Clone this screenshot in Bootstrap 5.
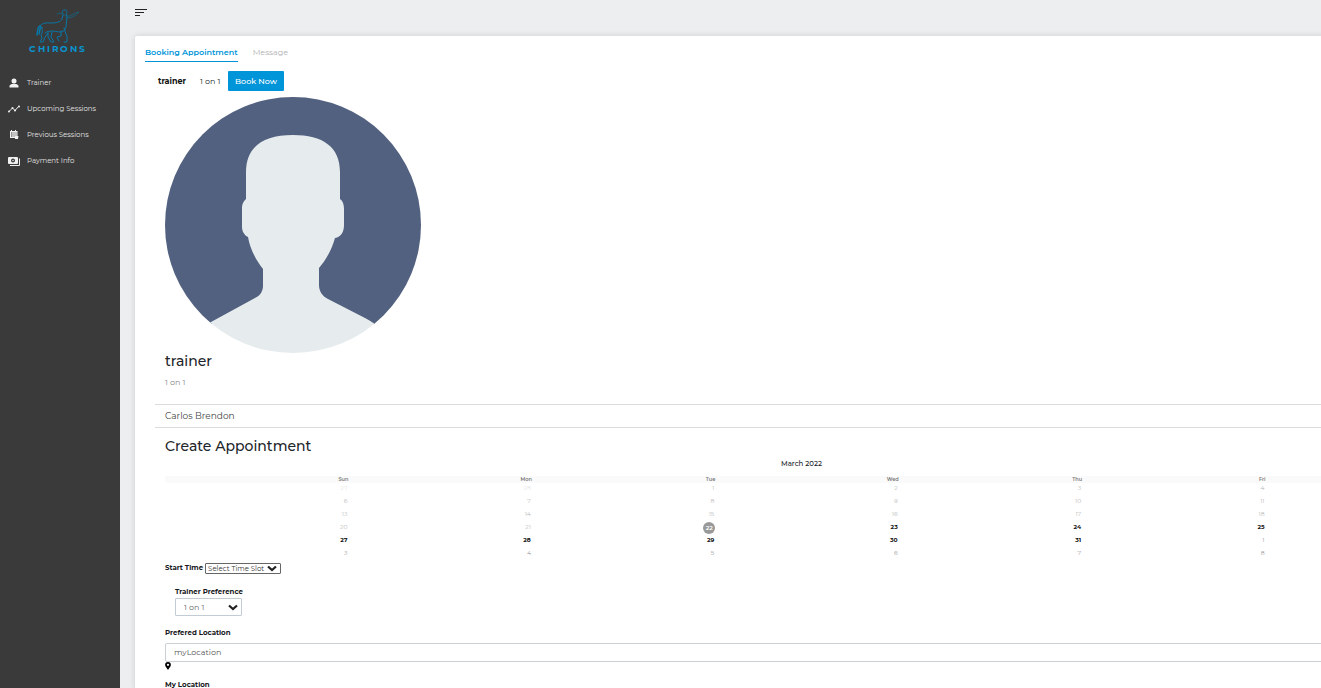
<!DOCTYPE html>
<html lang="en">
<head>
<meta charset="utf-8">
<meta name="viewport" content="width=device-width, initial-scale=1">
<title>Chirons - Booking Appointment</title>
<link href="https://cdn.jsdelivr.net/npm/bootstrap@5.3.0/dist/css/bootstrap.min.css" rel="stylesheet">
<style>
  body { font-family: Montserrat, Inter, sans-serif; font-size: 8px; line-height: 12px; background: #edeef0; color: #212529; }
  .shell { height: 100vh; }
  .side { width: 120px; background: #3a3a3a; }
  .logo { width: 60px; margin: 8px 0 0 28px; }
  .side-nav { margin-top: 16px; }
  .side-nav .nav-link { height: 26px; padding: 0 8px; gap: 7px; font-size: 7px; color: #e2e2e2; }
  .side-nav svg { width: 12px; height: 12px; fill: #f0f0f0; }
  .menu-btn { margin: 6px 0 18px 15px; height: 12px; width: 12px; line-height: 0; }
  .panel { width: 100vw; margin-left: 15px; padding: 10px 7px 0 10px; background: #fff; border-radius: 2px; box-shadow: 0 0 6px rgba(0,0,0,.14); }
  .tabs { gap: 15px; }
  .tabs .nav-link { padding: 0 0 3px; font-size: 8px; color: #b0b0b4; border-bottom: 1px solid transparent; }
  .tabs .nav-link.active { font-weight: 600; color: #0095d9; border-color: #0095d9; }
  .trainer-row { padding: 9px 0 6px 13px; }
  .trainer-row strong { width: 42px; font-weight: 700; color: #111; }
  .trainer-row span { width: 28px; }
  .btn-book { height: 20px; padding: 0 7px; font-size: 8px; line-height: 20px; font-weight: 500; color: #fff; background: #0095d9; border: 0; border-radius: 1px; }
  .btn-book:hover { color: #fff; background: #0082be; }
  .inset { padding-left: 10px; }
  .avatar { width: 256px; height: 256px; }
  .title { font-size: 14px; line-height: 16px; font-weight: 500; margin: 0; }
  .form-title { padding-top: 10px; }
  .role { margin: 7px 0 16px; color: #868686; }
  .who { margin-left: 10px; padding: 5px 10px; border: solid #dcdcdc; border-width: 1px 0; font-size: 9px; color: #444; }
  .cal { table-layout: fixed; margin: 0; width: 100%; text-align: right; }
  .cal th { height: 7px; padding: 0; background: #fafafa; font-size: 5px; line-height: 7px; font-weight: 600; color: #777; }
  .cal td { height: 13px; padding: 0 1px 0 0; font-size: 6px; line-height: 10px; vertical-align: top; color: #b8b8b8; }
  .cal .faint { color: #e6e6e6; }
  .cal .next { color: #999; }
  .cal .open { color: #111; font-weight: 700; }
  .cal .today { padding: 0; }
  .today span { display: inline-block; width: 12px; height: 12px; line-height: 12px; border-radius: 50%; background: #999; color: #fff; text-align: center; font-weight: 600; vertical-align: top; }
  .month { margin: 4px 11px 6px 0; font-size: 7px; font-weight: 500; }
  label { font-weight: 700; font-size: 7px; line-height: 12px; color: #17191c; }
  .drop { appearance: none; background: #fff url("data:image/svg+xml,%3Csvg xmlns='http://www.w3.org/2000/svg' viewBox='0 0 10 7'%3E%3Cpath d='M1 1.5 5 5 9 1.5' fill='none' stroke='%23222' stroke-width='2.2'/%3E%3C/svg%3E") no-repeat right 3px center / 10px 7px; }
  .slot-row { padding-top: 1px; }
  .slot { width: 76px; height: 11px; padding: 0 2px; margin-left: 2px; border: 1px solid #666; border-radius: 1px; font-size: 7px; line-height: 9px; color: #333; }
  .pref { margin: 12px 0 11px 10px; }
  .pref select { width: 67px; height: 18px; padding: 0 8px; border: 1px solid #c3cbd4; border-radius: 1px; font-size: 8px; color: #666; }
  .place { height: 19px; min-height: 0; padding: 0 8px 1px; margin-top: 4px; border: 1px solid #cbd0d5; border-radius: 2px; font-size: 8px; color: #555; }
  .pin { width: 6px; height: 8px; margin-bottom: 9px; }
</style>
</head>
<body>
<div class="shell d-flex overflow-hidden">
  <aside class="side flex-shrink-0">
    <svg class="logo d-block" viewBox="0 0 60 46" role="img" aria-label="Chirons">
      <g fill="none" stroke="#0878a8" stroke-width="1" stroke-linecap="round" stroke-linejoin="round">
        <path d="M12 18c3-4 7-3 11-3 6 0 9-1 11-4l1-4M35 6c-2-3 0-4 2-4s3 2 1 4l1 2"/>
        <path stroke-width=".8" stroke="#146583" d="M29 6l3-1 6 3 4 0 5-3 4-1-3 3-6 3-4-1"/>
        <path d="M39 9l-1 9c0 4-3 6-7 6-5-1-10-2-14 1"/>
        <path stroke-width="1.500" d="M12 18c-3 1-2 5-3 9M13 19c-2 3-1 5-2 7"/>
        <path d="M14 19c0 4 1 5-1 8l1 3-2 4h3l2-5 3-4M20 25l0 4 3 5h3l-3-5 1-5M33 23l0 5-4 1 2 4M36 20l2 6 1 2 0 6h-3"/>
      </g>
      <text y="44" fill="#0895d0" font-size="9" font-weight="700"><tspan x="1">C</tspan><tspan x="10">H</tspan><tspan x="19">I</tspan><tspan x="24">R</tspan><tspan x="32">O</tspan><tspan x="42">N</tspan><tspan x="51">S</tspan></text>
    </svg>
    <nav class="nav flex-column side-nav">
      <a class="nav-link d-flex align-items-center" href="#"><svg viewBox="0 0 24 24"><circle cx="12" cy="8" r="5"/><path d="M3 21v-3c0-3 6-4.500 9-4.500s9 1.500 9 4.500v3z"/></svg>Trainer</a>
      <a class="nav-link d-flex align-items-center" href="#"><svg viewBox="0 0 24 24"><path d="M2 17l7-7 5 5 8-9" fill="none" stroke="#f0f0f0" stroke-width="2"/><circle cx="2" cy="17" r="2"/><circle cx="9" cy="10" r="2"/><circle cx="14" cy="15" r="2"/><circle cx="22" cy="7" r="2"/></svg>Upcoming Sessions</a>
      <a class="nav-link d-flex align-items-center" href="#"><svg viewBox="0 0 24 24"><path fill-rule="evenodd" d="M4 4h2V2h2v2h6V2h2v2h3v10h2l-1 6h-6v-2H4zm2 3v2h3V7zm5 0v2h2V7zm4 0v2h2V7zm-9 4v2h3v-2zm5 0v2h2v-2zm4 0v2h2v-2zm-9 4v1h3v-1zm5 0v1h2v-1z"/></svg>Previous Sessions</a>
      <a class="nav-link d-flex align-items-center" href="#"><svg viewBox="0 0 24 24"><path fill-rule="evenodd" d="M2 4h16a2 2 0 0 1 2 2v10a2 2 0 0 1-2 2H2a2 2 0 0 1-2-2V6a2 2 0 0 1 2-2zm8 3a4 4 0 1 0 0 8 4 4 0 0 0 0-8zM22 7h2v13a2 2 0 0 1-2 2H4v-2h18z"/><circle cx="10" cy="11" r="1.500"/></svg>Payment Info</a>
    </nav>
  </aside>
  <main class="d-flex flex-column flex-shrink-0">
    <button class="menu-btn btn p-0 border-0 rounded-0" type="button" aria-label="Toggle menu"><svg width="12" height="12" viewBox="0 0 12 12" fill="#222"><path d="M0 3h12v1H0zM0 6h9v1H0zM0 9h5v1H0z"/></svg></button>
    <section class="panel flex-grow-1">
      <nav class="nav tabs">
        <a class="nav-link active" href="#">Booking Appointment</a>
        <a class="nav-link" href="#">Message</a>
      </nav>
      <div class="trainer-row d-flex align-items-center">
        <strong>trainer</strong><span>1 on 1</span>
        <button class="btn btn-book" type="button">Book Now</button>
      </div>
      <div class="inset">
        <div class="inset">
          <svg class="avatar d-block" viewBox="0 0 256 256" role="img" aria-label="trainer">
            <clipPath id="disc"><circle cx="128" cy="128" r="128"/></clipPath>
            <g clip-path="url(#disc)">
              <path fill="#52617f" d="M0 0h256v227H0z"/>
              <path fill="#e6ebed" d="M81 102V75C81 50 98 38 128 38s47 12 47 37v27c3 2 4 6 4 10v16c0 7-3 12-9 13-3 11-9 22-16 30v17c0 6 3 11 9 14l37 19c6 3 12 7 16 12v30H30v-26c5-5 10-9 16-12l44-24c5-2 8-7 8-12v-17c-7-9-13-20-15-32-4-2-6-6-6-10v-19c0-4 1-6 4-9z"/>
            </g>
          </svg>
          <h2 class="title">trainer</h2>
          <p class="role">1 on 1</p>
        </div>
      </div>
      <div class="who">Carlos Brendon</div>
      <form class="inset">
        <div class="inset">
          <h2 class="title form-title">Create Appointment</h2>
          <div class="month text-center">March 2022</div>
          <table class="cal">
            <thead><tr><th>Sun</th><th>Mon</th><th>Tue</th><th>Wed</th><th>Thu</th><th>Fri</th><th>Sat</th></tr></thead>
            <tbody>
              <tr><td class="faint">27</td><td class="faint">28</td><td>1</td><td>2</td><td>3</td><td>4</td><td>5</td></tr>
              <tr><td>6</td><td>7</td><td>8</td><td>9</td><td>10</td><td>11</td><td>12</td></tr>
              <tr><td>13</td><td>14</td><td>15</td><td>16</td><td>17</td><td>18</td><td>19</td></tr>
              <tr><td>20</td><td>21</td><td class="today"><span>22</span></td><td class="open">23</td><td class="open">24</td><td class="open">25</td><td class="open">26</td></tr>
              <tr><td class="open">27</td><td class="open">28</td><td class="open">29</td><td class="open">30</td><td class="open">31</td><td class="next">1</td><td class="next">2</td></tr>
              <tr><td class="next">3</td><td class="next">4</td><td class="next">5</td><td class="next">6</td><td class="next">7</td><td class="next">8</td><td class="next">9</td></tr>
            </tbody>
          </table>
          <div class="slot-row d-flex align-items-center">
            <label for="slot">Start Time</label>
            <select id="slot" class="drop slot"><option>Select Time Slot</option></select>
          </div>
          <div class="pref">
            <label class="d-block" for="pref">Trainer Preference</label>
            <select id="pref" class="drop d-block"><option>1 on 1</option></select>
          </div>
          <label class="d-block" for="place">Prefered Location</label>
          <input id="place" class="form-control place" type="text" value="myLocation">
          <svg class="pin d-block" viewBox="0 0 10 14"><path fill-rule="evenodd" d="M5 0a5 5 0 0 1 5 5c0 3-2 5-5 9C2 10 0 8 0 5a5 5 0 0 1 5-5zm0 3a2 2 0 1 0 0 4 2 2 0 0 0 0-4z"/></svg>
          <label class="d-block">My Location</label>
        </div>
      </form>
    </section>
  </main>
</div>
<script src="https://cdn.jsdelivr.net/npm/bootstrap@5.3.0/dist/js/bootstrap.bundle.min.js"></script>
</body>
</html>
